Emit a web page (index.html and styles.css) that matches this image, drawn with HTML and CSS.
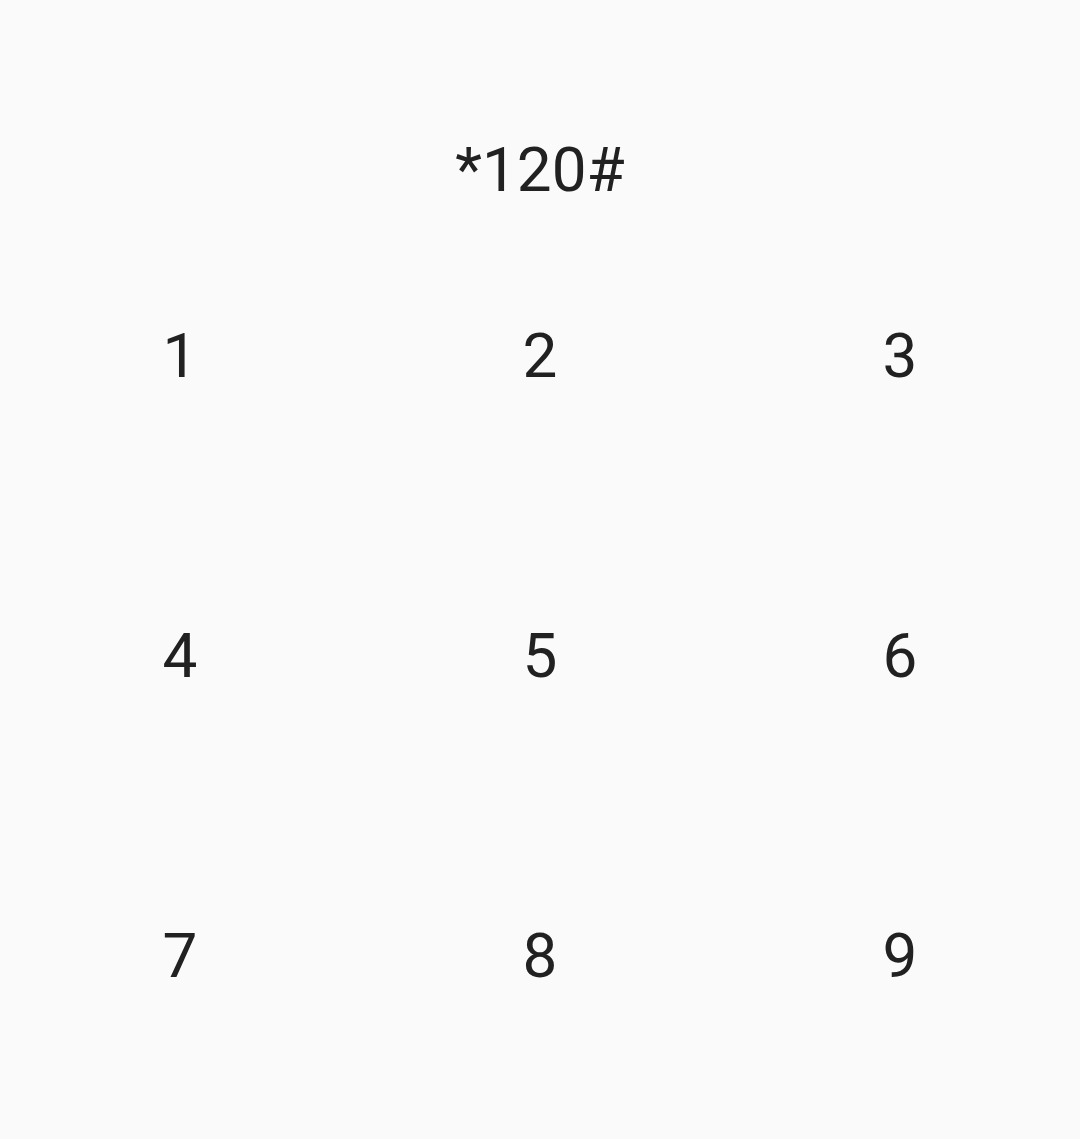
FILE: index.html
```html
<!DOCTYPE html>
<html>
<head>
<meta charset="utf-8">
<link rel="stylesheet" href="styles.css">
</head>
<body>
<div class="dialer">
  <div class="display">*120#</div>
  <div class="keypad">
    <div class="key">1</div>
    <div class="key">2</div>
    <div class="key">3</div>
    <div class="key">4</div>
    <div class="key">5</div>
    <div class="key">6</div>
    <div class="key">7</div>
    <div class="key">8</div>
    <div class="key">9</div>
  </div>
</div>
</body>
</html>
```
FILE: styles.css
```css
html, body {
  margin: 0;
  padding: 0;
  background: #fafafa;
}
.dialer {
  width: 1080px;
  height: 1139px;
  overflow: hidden;
  font-family: Roboto, "Noto Sans", sans-serif;
  color: #212121;
}
.display {
  padding-top: 133px;
  height: 73px;
  line-height: 74px;
  font-size: 62px;
  text-align: center;
}
.keypad {
  display: grid;
  grid-template-columns: repeat(3, 360px);
  grid-auto-rows: 300px;
}
.key {
  display: flex;
  align-items: center;
  justify-content: center;
  font-size: 62px;
  line-height: 80px;
}
```
